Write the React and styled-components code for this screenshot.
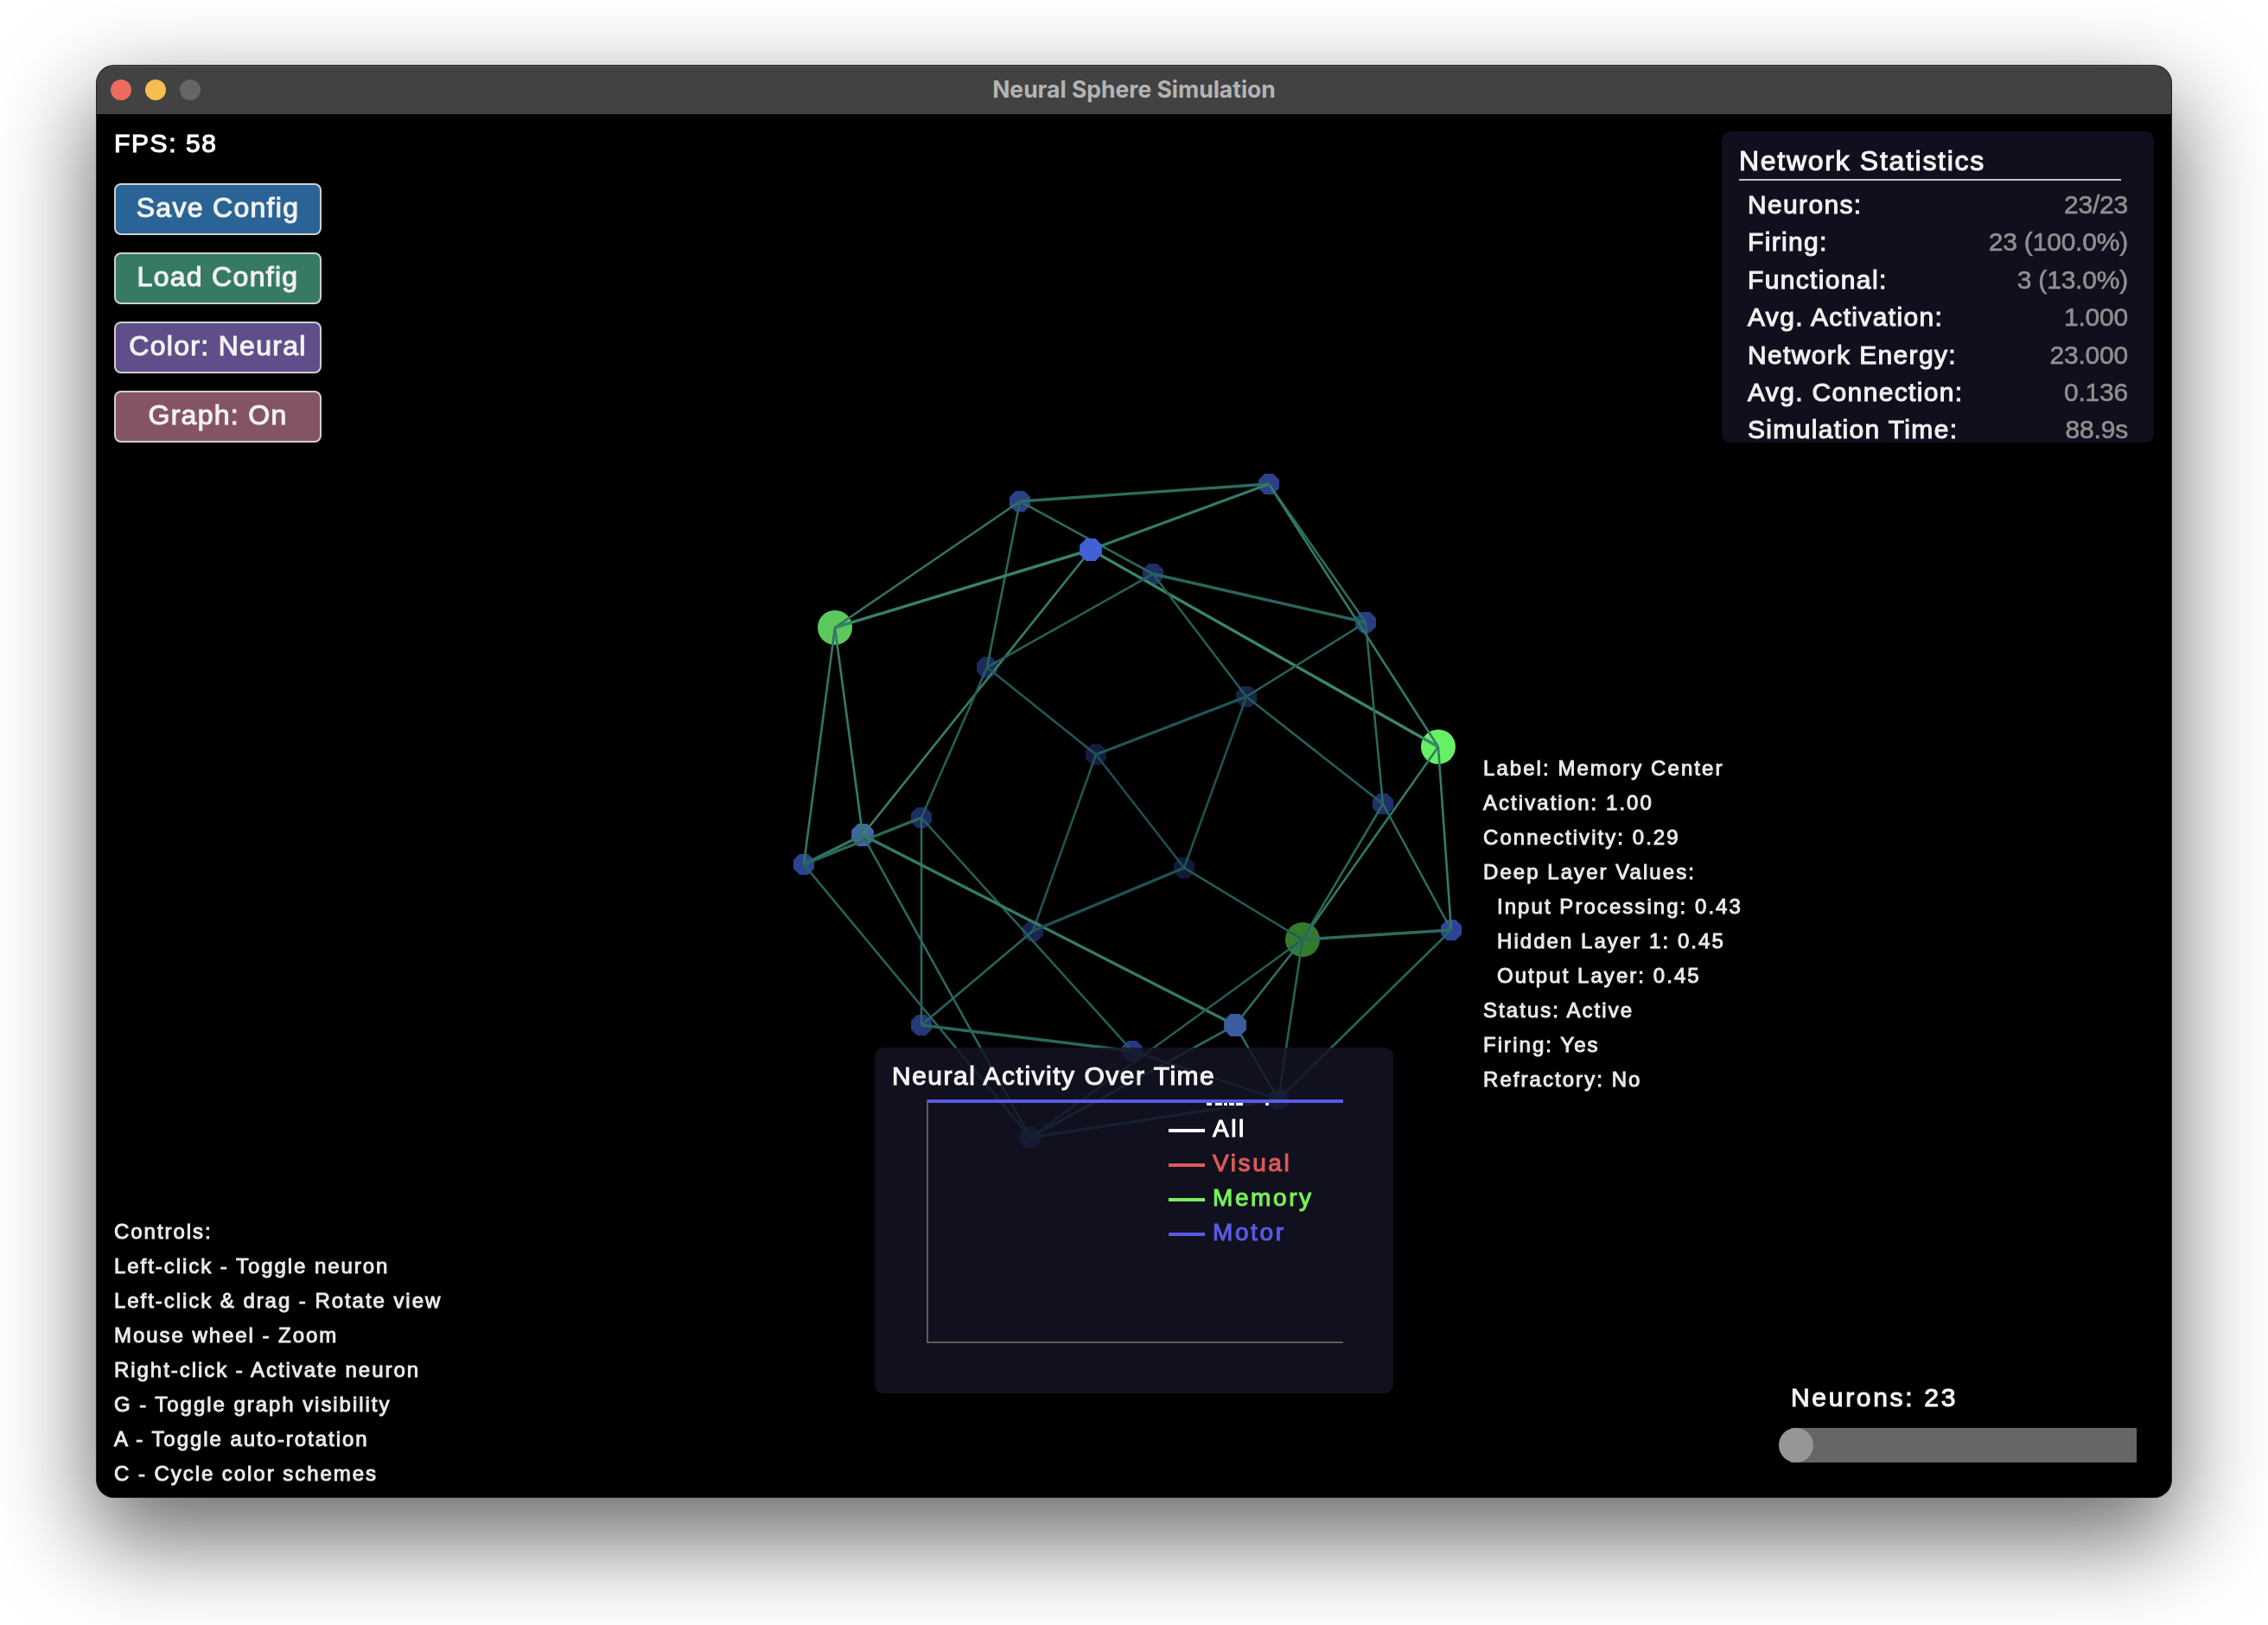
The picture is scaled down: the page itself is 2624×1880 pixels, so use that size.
import React from "react";
import styled, { createGlobalStyle, css } from "styled-components";

const GlobalStyle = createGlobalStyle`
  html, body { margin: 0; padding: 0; background: #fff; }
  body { width: 2624px; height: 1880px; overflow: hidden; font-family: "Liberation Sans", Arial, sans-serif; }
`;

const pixelText = css`
  font-family: "Liberation Sans", Arial, sans-serif;
  -webkit-text-stroke: 1.1px currentColor;
  filter: blur(0.5px);
`;

const Page = styled.div`
  width: 2624px;
  height: 1880px;
  box-sizing: border-box;
  padding: 76px 112px 148px;
`;

const Window = styled.div`
  height: 1656px;
  border-radius: 20px;
  overflow: hidden;
  display: flex;
  flex-direction: column;
  background: #000;
  box-shadow: 0 0 0 1px #222, 0 44px 110px 6px rgba(0, 0, 0, 0.58);
`;

const TitleBar = styled.div`
  position: relative;
  height: 56px;
  flex: none;
  display: flex;
  align-items: center;
  justify-content: center;
  padding-bottom: 2px;
  box-sizing: border-box;
  background: #424242;
  box-shadow: inset 0 1px 0 #5a5a5a;
`;

const TitleText = styled.div`
  font-family: Inter, "Liberation Sans", sans-serif;
  font-size: 26.5px;
  font-weight: 700;
  color: #b4b4b4;
`;

const Lights = styled.div`
  position: absolute;
  left: 16px;
  top: 16px;
  display: flex;
  gap: 16px;
`;

const Light = styled.span`
  width: 24px;
  height: 24px;
  border-radius: 50%;
  background: ${(p) => p.$color};
`;

const Canvas = styled.div`
  position: relative;
  flex: 1;
  background: #000;
  overflow: hidden;
`;

const SphereSvg = styled.svg`
  position: absolute;
  inset: 0;
  width: 2400px;
  height: 1600px;
  filter: blur(0.4px);
`;

const Hud = styled.div`
  position: absolute;
  inset: 0;
  display: flex;
  flex-direction: column;
  justify-content: space-between;
`;

const TopRow = styled.div`
  display: flex;
  justify-content: space-between;
  align-items: flex-start;
  padding: 20px 20px 0;
`;

const LeftColumn = styled.div`
  display: flex;
  flex-direction: column;
  gap: 20px;
`;

const Fps = styled.div`
  ${pixelText}
  height: 40px;
  line-height: 28px;
  font-size: 30px;
  letter-spacing: 1.6px;
  color: #fff;
`;

const ConfigButton = styled.button`
  ${pixelText}
  width: 240px;
  height: 60px;
  box-sizing: border-box;
  padding: 0 0 3px;
  border: 2px solid #cfcfcf;
  border-radius: 8px;
  background: ${(p) => p.$bg};
  color: #f2f2f2;
  font-size: 32px;
  letter-spacing: 1.3px;
`;

const StatsPanel = styled.div`
  width: 500px;
  height: 360px;
  box-sizing: border-box;
  padding: 0 20px;
  border-radius: 10px;
  overflow: hidden;
  background: rgba(15, 15, 30, 1);
`;

const StatsTitle = styled.div`
  ${pixelText}
  width: 442px;
  height: 55px;
  line-height: 69px;
  font-size: 32px;
  letter-spacing: 1.7px;
  color: #f4f4f4;
  border-bottom: 2px solid #c4c4c4;
`;

const StatRow = styled.div`
  display: flex;
  justify-content: space-between;
  height: 43.4px;
  line-height: 43.4px;
  padding: 0 10px;
  position: relative;
  top: 6px;
`;

const StatLabel = styled.span`
  ${pixelText}
  font-size: 30px;
  letter-spacing: 1.35px;
  color: #f0f0f0;
`;

const StatValue = styled.span`
  font-family: "Liberation Sans", Arial, sans-serif;
  -webkit-text-stroke: 0.6px currentColor;
  filter: blur(0.5px);
  font-size: 30px;
  letter-spacing: -0.2px;
  color: #8f8f8f;
`;

const BottomRow = styled.div`
  display: grid;
  grid-template-columns: 1fr 600px 1fr;
  align-items: end;
`;

const InfoLines = styled.div`
  ${pixelText}
  -webkit-text-stroke-width: 0.95px;
  font-size: 24px;
  line-height: 40px;
  letter-spacing: 2.05px;
  color: #eaeaea;
  white-space: pre;
`;

const Line = styled.div`
  padding-left: ${(p) => (p.$indent ? "16px" : "0")};
`;

const Controls = styled(InfoLines)`
  padding: 0 0 7px 20px;
  align-self: end;
  letter-spacing: 1.95px;
`;

const NodeInfo = styled(InfoLines)`
  position: absolute;
  left: 1604px;
  top: 737px;
`;

const GraphPanel = styled.div`
  height: 400px;
  margin-bottom: 120px;
  box-sizing: border-box;
  padding: 0 58px 0 60px;
  border-radius: 10px;
  background: rgba(19, 19, 37, 0.82);
`;

const GraphTitle = styled.div`
  ${pixelText}
  margin-left: -40px;
  height: 60px;
  line-height: 66px;
  font-size: 30px;
  letter-spacing: 1.5px;
  color: #f2f2f2;
`;

const Plot = styled.div`
  position: relative;
  width: 482px;
  height: 282px;
  box-sizing: border-box;
  overflow: hidden;
  border-left: 2px solid #5c5c5c;
  border-bottom: 2px solid #5c5c5c;
`;

const TraceLine = styled.div`
  height: 4px;
  margin-left: -2px;
  background: #5a5ae6;
`;

const ClippedMarks = styled.svg`
  display: block;
  width: 480px;
  height: 6px;
`;

const Legend = styled.div`
  position: absolute;
  left: 278px;
  top: 18px;
  display: flex;
  flex-direction: column;
  gap: 8px;
`;

const LegendRow = styled.div`
  display: flex;
  align-items: center;
  gap: 9px;
  height: 32px;
  color: ${(p) => p.$color};
`;

const LegendSwatch = styled.span`
  width: 42px;
  height: 4px;
  margin-top: 4px;
  background: currentColor;
`;

const LegendText = styled.span`
  ${pixelText}
  font-size: 28px;
  line-height: 32px;
  letter-spacing: 2.6px;
`;

const SliderBox = styled.div`
  justify-self: end;
  width: 400px;
  padding: 0 40px 40px 0;
`;

const SliderLabel = styled.div`
  ${pixelText}
  height: 48px;
  line-height: 26px;
  font-size: 30px;
  letter-spacing: 2.7px;
  color: #f4f4f4;
`;

const SliderTrack = styled.div`
  position: relative;
  height: 40px;
  background: #666;
`;

const SliderHandle = styled.div`
  position: absolute;
  left: -14px;
  top: 0;
  width: 40px;
  height: 40px;
  border-radius: 50%;
  background: #969696;
`;

// node positions read off the reference, in page coordinates; z is depth (1 = near)
const NODES = {
  A: [1180, 580, 12, "#2b4289", 0.55],
  B: [1468, 560, 12, "#2c4187", 0.55],
  C: [1262, 636, 13, "#4261d8", 1],
  D: [1334, 664, 12, "#1f2f62", 0.35],
  E: [1580, 720, 12, "#2a3c82", 0.5],
  F: [966, 726, 20, "#5cc85c", 0.8],
  G: [1142, 772, 12, "#1c2a5c", 0.3],
  H: [1442, 806, 12, "#182448", 0.2],
  I: [1268, 873, 12, "#141c40", 0.1],
  J: [1664, 864, 20, "#66f066", 1],
  K: [1600, 930, 12, "#20306c", 0.4],
  L: [1066, 946, 12, "#1c2c64", 0.3],
  M: [998, 966, 13, "#4464a8", 0.8],
  N: [930, 1000, 12, "#2c4490", 0.6],
  O: [1370, 1004, 12, "#121a38", 0],
  P: [1195, 1077, 12, "#1a2450", 0.2],
  Q: [1507, 1087, 20, "#347a2c", 0.5],
  R: [1679, 1076, 12, "#2c4498", 0.6],
  S: [1066, 1186, 12, "#24387c", 0.6],
  T: [1429, 1186, 13, "#3c5ca0", 0.8],
  U: [1310, 1216, 12, "#25397f", 0.3],
  V: [1479, 1272, 12, "#25397f", 0.2],
  W: [1192, 1316, 12, "#25397f", 0.1],
};

// pair, optional stroke width
const EDGES = [
  ["AB", 3.4], ["AF"], ["AG"], ["AD"], ["BC", 3.4], ["BE"], ["BJ"], ["CF", 3.4], ["CJ", 3.4], ["CM"],
  ["DE", 3.4], ["DG"], ["DH"], ["EH"], ["EK"], ["HI", 3.4], ["HK"], ["HO"], ["IG"], ["IO"], ["IP"],
  ["GL"], ["FN"], ["FM"], ["MN", 3.4], ["LN", 3.4], ["LU"], ["LS"], ["MW"], ["NW"], ["MT", 3.4],
  ["PO", 3.4], ["PS"], ["OQ"], ["JR"], ["JQ"], ["KQ"], ["KR"], ["QR", 3.4], ["QW"], ["QT"], ["QV"],
  ["RV"], ["TW"], ["TV"], ["SU", 3.4], ["UV"], ["VW", 3.4],
];

const FRONT_NODES = ["C", "T"];

const edgeColor = (z) => {
  const mix = (a, b) => Math.round(a + (b - a) * z);
  return `rgb(${mix(28, 58)},${mix(76, 135)},${mix(80, 108)})`;
};

const octagon = (x, y, r) => {
  const pts = [];
  for (let i = 0; i < 8; i++) {
    const a = Math.PI / 8 + (i * Math.PI) / 4;
    pts.push(`${(x + r * Math.cos(a)).toFixed(1)},${(y + r * Math.sin(a)).toFixed(1)}`);
  }
  return pts.join(" ");
};

const Neuron = ({ id }) => {
  const [x, y, r, color] = NODES[id];
  if (r >= 20) return <circle cx={x} cy={y} r={r} fill={color} />;
  return <polygon points={octagon(x, y, r + 1)} fill={color} />;
};

const Sphere = () => {
  const ids = Object.keys(NODES);
  return (
    <SphereSvg viewBox="112 132 2400 1600">
      {ids.filter((id) => !FRONT_NODES.includes(id)).map((id) => (
        <Neuron key={id} id={id} />
      ))}
      {EDGES.map(([pair, width]) => {
        const a = NODES[pair[0]];
        const b = NODES[pair[1]];
        return (
          <line
            key={pair}
            x1={a[0]}
            y1={a[1]}
            x2={b[0]}
            y2={b[1]}
            stroke={edgeColor((a[4] + b[4]) / 2)}
            strokeWidth={width || 2.6}
          />
        );
      })}
      {FRONT_NODES.map((id) => (
        <Neuron key={id} id={id} />
      ))}
    </SphereSvg>
  );
};

const STATS = [
  ["Neurons:", "23/23"],
  ["Firing:", "23 (100.0%)"],
  ["Functional:", "3 (13.0%)"],
  ["Avg. Activation:", "1.000"],
  ["Network Energy:", "23.000"],
  ["Avg. Connection:", "0.136"],
  ["Simulation Time:", "88.9s"],
];

const BUTTONS = [
  ["Save Config", "#2a6496"],
  ["Load Config", "#367a66"],
  ["Color: Neural", "#5f4e8a"],
  ["Graph: On", "#855464"],
];

const CONTROLS = [
  "Controls:",
  "Left-click - Toggle neuron",
  "Left-click & drag - Rotate view",
  "Mouse wheel - Zoom",
  "Right-click - Activate neuron",
  "G - Toggle graph visibility",
  "A - Toggle auto-rotation",
  "C - Cycle color schemes",
];

const NODE_INFO = [
  ["Label: Memory Center"],
  ["Activation: 1.00"],
  ["Connectivity: 0.29"],
  ["Deep Layer Values:"],
  ["Input Processing: 0.43", true],
  ["Hidden Layer 1: 0.45", true],
  ["Output Layer: 0.45", true],
  ["Status: Active"],
  ["Firing: Yes"],
  ["Refractory: No"],
];

const LEGEND = [
  ["All", "#ffffff"],
  ["Visual", "#de5a58"],
  ["Memory", "#78f05a"],
  ["Motor", "#5a5ae6"],
];

// bottoms of a legend title cut off by the top of the plot
const CLIPPED = [[322, 6], [332, 8], [342, 4], [348, 6], [356, 8], [390, 4]];

export default function App() {
  return (
    <>
      <GlobalStyle />
      <Page>
        <Window>
          <TitleBar>
            <Lights>
              <Light $color="#ee6a5e" />
              <Light $color="#f5bf4f" />
              <Light $color="#666666" />
            </Lights>
            <TitleText>Neural Sphere Simulation</TitleText>
          </TitleBar>
          <Canvas>
            <Sphere />
            <Hud>
              <TopRow>
                <LeftColumn>
                  <Fps>FPS: 58</Fps>
                  {BUTTONS.map(([label, bg]) => (
                    <ConfigButton key={label} $bg={bg}>{label}</ConfigButton>
                  ))}
                </LeftColumn>
                <StatsPanel>
                  <StatsTitle>Network Statistics</StatsTitle>
                  {STATS.map(([label, value]) => (
                    <StatRow key={label}>
                      <StatLabel>{label}</StatLabel>
                      <StatValue>{value}</StatValue>
                    </StatRow>
                  ))}
                </StatsPanel>
              </TopRow>
              <BottomRow>
                <Controls>
                  {CONTROLS.map((text) => (
                    <Line key={text}>{text}</Line>
                  ))}
                </Controls>
                <GraphPanel>
                  <GraphTitle>Neural Activity Over Time</GraphTitle>
                  <Plot>
                    <TraceLine />
                    <ClippedMarks viewBox="0 0 480 6">
                      {CLIPPED.map(([x, w]) => (
                        <rect key={x} x={x} y="0" width={w} height="3" fill="#fff" />
                      ))}
                    </ClippedMarks>
                    <Legend>
                      {LEGEND.map(([label, color]) => (
                        <LegendRow key={label} $color={color}>
                          <LegendSwatch />
                          <LegendText>{label}</LegendText>
                        </LegendRow>
                      ))}
                    </Legend>
                  </Plot>
                </GraphPanel>
                <SliderBox>
                  <SliderLabel>Neurons: 23</SliderLabel>
                  <SliderTrack>
                    <SliderHandle />
                  </SliderTrack>
                </SliderBox>
              </BottomRow>
            </Hud>
            <NodeInfo>
              {NODE_INFO.map(([text, indent]) => (
                <Line key={text} $indent={indent}>{text}</Line>
              ))}
            </NodeInfo>
          </Canvas>
        </Window>
      </Page>
    </>
  );
}
